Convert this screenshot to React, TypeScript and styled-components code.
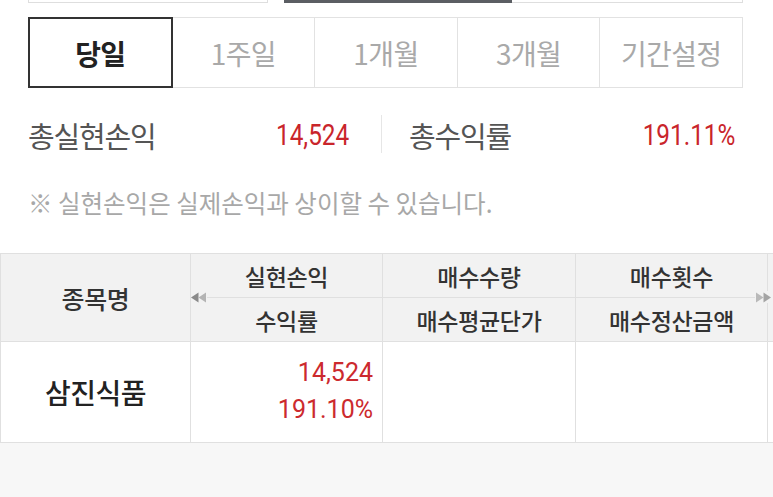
import React from "react";
import styled, { createGlobalStyle } from "styled-components";

const Global = createGlobalStyle`
  html, body { margin: 0; padding: 0; background: #fff; }
  body { font-family: "Noto Sans CJK KR", "Noto Sans", sans-serif; }
  #root { min-height: 100vh; display: flex; flex-direction: column; }
`;

const Page = styled.div`
  flex: 1;
  display: flex;
  flex-direction: column;
  background: #fff;
`;

const Inner = styled.div`
  margin: 0 30px 0 28px;
`;

const TopStrip = styled.div`
  display: flex;
  gap: 16px;
  height: 3px;
`;

const TopBox = styled.div`
  width: 240px;
  box-sizing: border-box;
  border: 1px solid #dedede;
  border-top: none;
`;

const TopSeg = styled.div`
  flex: 1;
  display: flex;
`;

const SegPart = styled.div<{ $active?: boolean }>`
  box-sizing: border-box;
  width: ${(p) => (p.$active ? "228px" : "auto")};
  flex: ${(p) => (p.$active ? "none" : "1")};
  background: ${(p) => (p.$active ? "#5b5e63" : "#fff")};
  border-bottom: ${(p) => (p.$active ? "none" : "1px solid #dedede")};
  border-right: ${(p) => (p.$active ? "none" : "1px solid #dedede")};
`;

const Tabs = styled.div`
  margin-top: 14px;
  display: grid;
  grid-template-columns: repeat(5, 1fr);
  height: 71px;
  border: 1px solid #e2e2e2;
  box-sizing: border-box;
`;

const Tab = styled.div<{ $active?: boolean }>`
  display: flex;
  align-items: center;
  justify-content: center;
  font-size: 28px;
  letter-spacing: -0.6px;
  font-weight: ${(p) => (p.$active ? 700 : 400)};
  color: ${(p) => (p.$active ? "#222" : "#a9a9a9")};
  border-left: 1px solid #e2e2e2;
  &:first-child { border-left: none; }
  ${(p) =>
    p.$active
      ? `outline: 2px solid #333; outline-offset: -1px; position: relative; z-index: 1;`
      : ""}
`;

const Summary = styled.div`
  margin-top: 27px;
  display: flex;
  align-items: center;
  height: 38px;
  padding-right: 8px;
`;

const SumItem = styled.div<{ $grow?: boolean }>`
  display: flex;
  align-items: center;
  justify-content: space-between;
  width: ${(p) => (p.$grow ? "auto" : "321px")};
  flex: ${(p) => (p.$grow ? "1" : "none")};
`;

const SumLabel = styled.span`
  font-size: 29px;
  letter-spacing: -1.2px;
  color: #555;
  line-height: 1;
  padding-top: 3px;
`;

const SumValue = styled.span`
  display: inline-block;
  font-family: Roboto, "Liberation Sans", sans-serif;
  font-size: 29px;
  color: #c9252b;
  line-height: 1;
  padding-top: 3px;
  transform: scaleX(0.84);
  transform-origin: right center;
`;

const VDivider = styled.div`
  width: 1px;
  align-self: stretch;
  background: #e6e6e6;
  margin: 0 27px 0 32px;
`;

const Note = styled.p`
  margin: 35px 0 0;
  font-size: 24.5px;
  line-height: 30px;
  letter-spacing: 0;
  color: #a8a8a8;
`;

const TableWrap = styled.div`
  position: relative;
  margin-top: 35px;
`;

const Table = styled.table`
  width: 773px;
  border-collapse: collapse;
  table-layout: fixed;
`;

const Th = styled.th<{ $big?: boolean }>`
  height: 43px;
  padding: 0;
  background: #f2f2f2;
  border: 1px solid #e0e0e0;
  font-size: ${(p) => (p.$big ? "25px" : "23px")};
  font-weight: 500;
  letter-spacing: -0.3px;
  color: #333;
  text-align: center;
  vertical-align: middle;
`;

const Td = styled.td<{ $name?: boolean }>`
  height: 98px;
  padding: 0 9px 2px 0;
  border: 1px solid #e0e0e0;
  background: #fff;
  text-align: ${(p) => (p.$name ? "center" : "right")};
  vertical-align: middle;
  font-size: ${(p) => (p.$name ? "28px" : "25px")};
  font-weight: ${(p) => (p.$name ? 500 : 400)};
  color: ${(p) => (p.$name ? "#222" : "#cc2a2e")};
  ${(p) => (p.$name ? "padding: 0; letter-spacing: -0.5px;" : "")}
`;

const Num = styled.div`
  font-family: Roboto, "Liberation Sans", sans-serif;
  line-height: 37px;
`;

const Arrow = styled.div<{ $side: "left" | "right" }>`
  position: absolute;
  top: 38px;
  ${(p) => (p.$side === "left" ? "left: 191px;" : "left: 755px;")}
  width: 16px;
  height: 12px;
  background: #f2f2f2;
  display: flex;
  align-items: center;
  justify-content: center;
`;

const Filler = styled.div`
  flex: 1;
  background: #f7f7f7;
`;

const LeftArrows = () => (
  <svg width="16" height="11" viewBox="0 0 16 11">
    <polygon points="0,5.5 7.5,0.5 7.5,10.5" fill="#8a8a8a" />
    <polygon points="7.5,5.5 15,0.5 15,10.5" fill="#b4b4b4" />
  </svg>
);

const RightArrows = () => (
  <svg width="16" height="11" viewBox="0 0 16 11">
    <polygon points="1,0.5 8.5,5.5 1,10.5" fill="#b9b9b9" />
    <polygon points="8.5,0.5 16,5.5 8.5,10.5" fill="#a4a4a4" />
  </svg>
);

const tabs = ["당일", "1주일", "1개월", "3개월", "기간설정"];

export default function App() {
  return (
    <Page>
      <Global />
      <Inner>
        <TopStrip>
          <TopBox />
          <TopSeg>
            <SegPart $active />
            <SegPart />
          </TopSeg>
        </TopStrip>
        <Tabs>
          {tabs.map((t, i) => (
            <Tab key={t} $active={i === 0}>
              {t}
            </Tab>
          ))}
        </Tabs>
        <Summary>
          <SumItem>
            <SumLabel>총실현손익</SumLabel>
            <SumValue>14,524</SumValue>
          </SumItem>
          <VDivider />
          <SumItem $grow>
            <SumLabel>총수익률</SumLabel>
            <SumValue>191.11%</SumValue>
          </SumItem>
        </Summary>
        <Note>※ 실현손익은 실제손익과 상이할 수 있습니다.</Note>
      </Inner>
      <TableWrap>
        <Table>
          <colgroup>
            <col style={{ width: 190 }} />
            <col style={{ width: 192 }} />
            <col style={{ width: 193 }} />
            <col style={{ width: 192 }} />
            <col style={{ width: 6 }} />
          </colgroup>
          <thead>
            <tr>
              <Th rowSpan={2} $big>
                종목명
              </Th>
              <Th>실현손익</Th>
              <Th>매수수량</Th>
              <Th>매수횟수</Th>
              <Th rowSpan={2} />
            </tr>
            <tr>
              <Th>수익률</Th>
              <Th>매수평균단가</Th>
              <Th>매수정산금액</Th>
            </tr>
          </thead>
          <tbody>
            <tr>
              <Td $name>삼진식품</Td>
              <Td>
                <Num>14,524</Num>
                <Num>191.10%</Num>
              </Td>
              <Td />
              <Td />
              <Td />
            </tr>
          </tbody>
        </Table>
        <Arrow $side="left">
          <LeftArrows />
        </Arrow>
        <Arrow $side="right">
          <RightArrows />
        </Arrow>
      </TableWrap>
      <Filler />
    </Page>
  );
}
